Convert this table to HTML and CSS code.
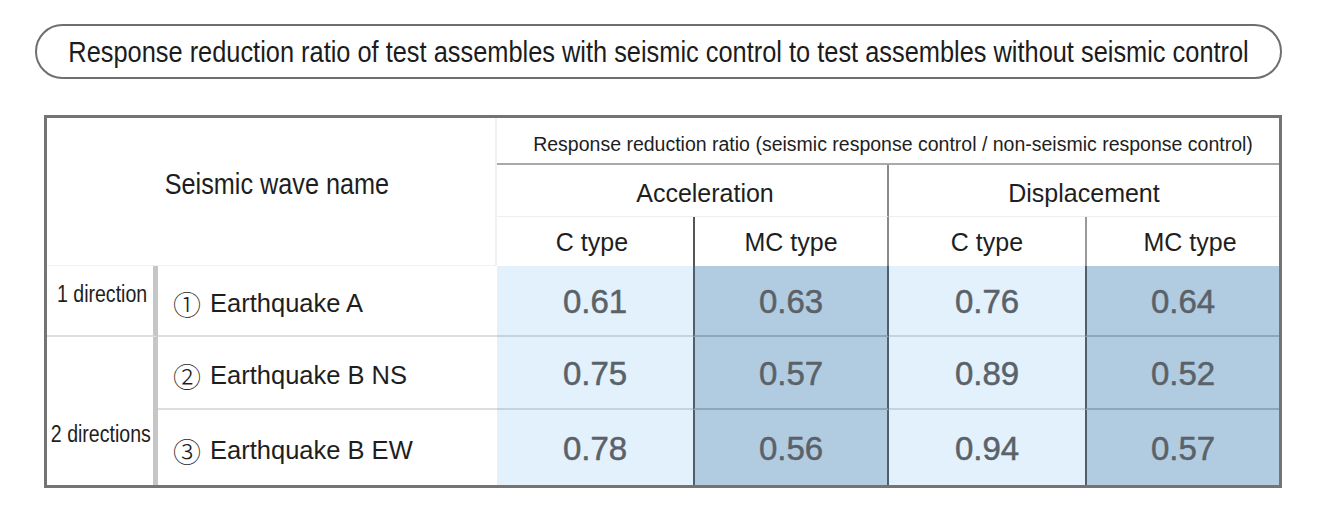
FILE: index.html
```html
<!DOCTYPE html>
<html lang="en">
<head>
<meta charset="utf-8">
<title>Response reduction ratio</title>
<link rel="stylesheet" href="styles.css">
</head>
<body>
<div class="page">
  <div class="pill"><span class="pill-text">Response reduction ratio of test assembles with seismic control to test assembles without seismic control</span></div>
  <div class="table">
    <div class="cell name-head"><span class="narrow name-text">Seismic wave name</span></div>
    <div class="cell ratio-head">Response reduction ratio (seismic response control / non-seismic response control)</div>
    <div class="cell acc-head">Acceleration</div>
    <div class="cell disp-head">Displacement</div>
    <div class="cell type c-acc">C type</div>
    <div class="cell type mc-acc">MC type</div>
    <div class="cell type c-disp">C type</div>
    <div class="cell type mc-disp">MC type</div>

    <div class="cell dir dir-1"><span class="narrow dir-text">1 direction</span></div>
    <div class="cell wave r1"><span class="num-mark">①</span>Earthquake A</div>
    <div class="cell val light r1">0.61</div>
    <div class="cell val dark mc-a r1">0.63</div>
    <div class="cell val light r1">0.76</div>
    <div class="cell val dark mc-d r1">0.64</div>

    <div class="cell dir dir-2"><span class="narrow dir-text">2 directions</span></div>
    <div class="cell wave r2"><span class="num-mark">②</span>Earthquake B NS</div>
    <div class="cell val light r2">0.75</div>
    <div class="cell val dark mc-a r2">0.57</div>
    <div class="cell val light r2">0.89</div>
    <div class="cell val dark mc-d r2">0.52</div>

    <div class="cell wave r3 last"><span class="num-mark">③</span>Earthquake B EW</div>
    <div class="cell val light r3 last">0.78</div>
    <div class="cell val dark mc-a r3 last">0.56</div>
    <div class="cell val light r3 last">0.94</div>
    <div class="cell val dark mc-d r3 last">0.57</div>
  </div>
</div>
</body>
</html>
```
FILE: styles.css
```css
* { box-sizing: border-box; }
html, body { margin: 0; padding: 0; background: #ffffff; }
body { font-family: "Liberation Sans", Arial, sans-serif; color: #1e1e1e; }

.page {
  width: 1318px;
  height: 514px;
  padding: 24px 0 0 35px;
}

.pill {
  width: 1247px;
  height: 55px;
  border: 2px solid #6f6f6f;
  border-radius: 28px;
  display: flex;
  align-items: center;
  justify-content: center;
  padding-top: 1px;
}
.pill-text {
  display: inline-block;
  font-size: 29px;
  color: #1c1c1c;
  white-space: nowrap;
  transform: scaleX(0.875);
  margin: 0 -86px;
}

.narrow {
  display: inline-block;
  white-space: nowrap;
}

.table {
  margin: 36px 0 0 9px;
  width: 1238px;
  border: 3px solid #747474;
  display: grid;
  grid-template-columns: 111px 339px 196px 196px 196px 194px;
  grid-template-rows: 47px 52px 49px 71px 73px 75px;
  background: #fff;
}

.cell {
  display: flex;
  align-items: center;
  justify-content: center;
  white-space: nowrap;
}

.name-head {
  grid-column: 1 / 3;
  grid-row: 1 / 4;
  padding-bottom: 14px;
  padding-left: 11px;
  border-right: 2px solid #f1f1f1;
  border-bottom: 1px solid #f1f1f1;
}
.name-text {
  font-size: 29px;
  transform: scaleX(0.87);
  margin: 0 -17px;
}

.ratio-head {
  grid-column: 3 / 7;
  grid-row: 1;
  font-size: 19.5px;
  border-bottom: 2px solid #a9a9a9;
  padding-top: 7px;
  padding-left: 10px;
}

.acc-head, .disp-head {
  grid-row: 2;
  font-size: 25px;
  padding-top: 5px;
  border-bottom: 1px solid #eeeeee;
}
.acc-head { grid-column: 3 / 5; border-right: 2px solid #8a8a8a; padding-left: 26px; }
.disp-head { grid-column: 5 / 7; }

.type { grid-row: 3; font-size: 25px; padding-top: 2px; }
.c-acc { grid-column: 3; padding-right: 6px; }
.mc-acc { grid-column: 4; border-left: 2px solid #555555; border-right: 2px solid #8a8a8a; }
.c-disp { grid-column: 5; }
.mc-disp { grid-column: 6; border-left: 2px solid #9a9a9a; padding-left: 14px; }

.dir {
  grid-column: 1;
  border-right: 5px solid #c6c6c6;
  align-items: flex-start;
}
.dir-text {
  font-size: 23px;
  transform: scaleX(0.85);
  margin: 0 -9px;
}
.dir-1 { grid-row: 4; border-bottom: 2px solid #dddddd; padding-top: 15px; padding-left: 4px; }
.dir-2 { grid-row: 5 / 7; padding-top: 84px; padding-left: 2px; }

.wave {
  grid-column: 2;
  justify-content: flex-start;
  padding-left: 15px;
  padding-top: 6px;
  font-size: 25.5px;
  border-bottom: 2px solid #dddddd;
}
.wave.last { border-bottom: none; }
.num-mark {
  font-family: "Noto Sans CJK JP", "DejaVu Sans", sans-serif;
  font-size: 28px;
  font-weight: 300;
  margin-right: 9px;
  line-height: 1;
}

.r1 { grid-row: 4; }
.r2 { grid-row: 5; }
.r3 { grid-row: 6; }

.val {
  font-size: 33px;
  color: #5b6168;
  -webkit-text-stroke: 0.5px #5b6168;
  padding-top: 3px;
}
.light { background: #e2f1fb; border-bottom: 2px solid #c4d3dd; }
.dark { background: #b1cce0; border-bottom: 2px solid #8fa6b8; }
.val.last { border-bottom: none; }
.mc-a { border-left: 2px solid #4f5f6e; border-right: 2px solid #4f5f6e; }
.mc-d { border-left: 2px solid #4f5f6e; }
```
